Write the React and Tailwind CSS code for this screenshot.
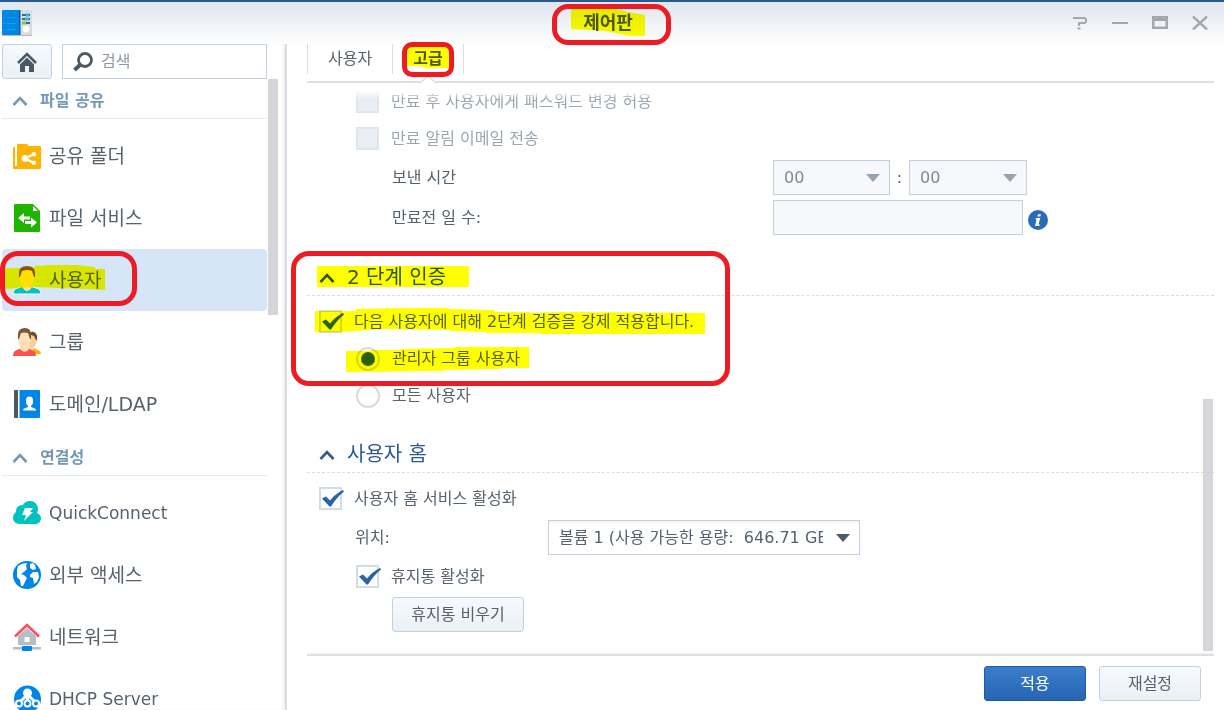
import React, { useState } from "react";

const FolderIcon = () => (
  <svg width="28" height="28" viewBox="0 0 28 28">
    <path d="M0 5h2v19H0z" fill="#ffb300" />
    <path d="M4 3q0-1 1-1h9q1 0 1 2h12q1 0 1 1v21q0 1-1 1H1q-1 0-1-1v-2h4z" fill="#ffb300" />
    <path d="M21 12l-9 4.500 9 4.500" stroke="#fff" strokeWidth="2.400" fill="none" />
    <circle cx="12" cy="16.500" r="3.400" fill="#fff" />
    <circle cx="21" cy="12.200" r="2.300" fill="#fff" />
    <circle cx="21" cy="20.800" r="2.300" fill="#fff" />
  </svg>
);

const FileServiceIcon = () => (
  <svg width="28" height="28" viewBox="0 0 28 28">
    <path d="M2 0h18l7 7v20q0 1-1 1H2q-1 0-1-1V1q0-1 1-1z" fill="#1eb400" />
    <path d="M20 2v5h5z" fill="#fff" />
    <path d="M5 14l6-5v3.500h6v3h-6V19zM24 18.500l-6 5V20h-6v-3h6v-3.500z" fill="#fff" />
  </svg>
);

const UserIcon = () => (
  <svg width="30" height="30" viewBox="0 0 30 30" className="-m-px">
    <path d="M1 29q0-5 5-6l6-2h6l6 2q5 1 5 6z" fill="#00c2c7" stroke="#fff" />
    <path d="M10 18h10v4q-5 8-10 0z" fill="#ffdcae" />
    <path d="M8 8q0-6 7-6t7 6v6q-2 9-7 9t-7-9z" fill="#ffe0b5" />
    <path d="M7 12V8q0-7 8-7t8 7v4h-1l-2-6q-4-2-10 0l-2 6z" fill="#8a5227" />
  </svg>
);

const GroupIcon = () => (
  <svg width="28" height="28" viewBox="0 0 28 28">
    <path d="M20 20l5 2q3 1 3 4h-8z" fill="#ffb300" />
    <path d="M17 6q7-2 7 5 0 6-4 9l-4 2z" fill="#f8cf98" />
    <path d="M15 6q2-3 6-2 4 2 3 8h-1l-2-4z" fill="#6d4a33" />
    <path d="M0 28q0-5 4-6l5-2h5l5 2q4 1 4 6z" fill="#ff5050" />
    <path d="M7 17h9v4q-4 6-9 0z" fill="#ffdcae" />
    <path d="M5 7q0-6 6-6 7 0 7 6v5q-2 8-7 8-4 0-6-8z" fill="#ffe0b8" />
    <path d="M5 11V7q0-7 7-7 6 0 6 7v4h-1l-2-6q-4-1-7 0l-2 6z" fill="#7d543a" />
  </svg>
);

const DomainIcon = () => (
  <svg width="28" height="28" viewBox="0 0 28 28">
    <path d="M2 0h3v28H2q-1 0-1-1V1q0-1 1-1z" fill="#4b5865" />
    <path d="M6.500 0H26q1 0 1 1v26q0 1-1 1H6.500z" fill="#0086e8" />
    <path d="M13 10q0-3.500 3.500-3.500T20 10v3q-1 2.500-2 3v1l4 1.500q1 .5 1 2H10q0-1.500 1-2l4-1.500v-1q-1-.5-2-3z" fill="#fff" />
  </svg>
);

const CloudIcon = () => (
  <svg width="28" height="28" viewBox="0 0 28 28">
    <path d="M6 25q-6-1-6-6 0-4 3-6 0-7 7-7 2-4 7-4 7 0 8 8 0 2-1 4 4 2 4 5 0 5-5 6z" fill="#00c3c0" />
    <path d="M12 9h8l-3 4h3l-9 9 2-6H9z" fill="#fff" />
  </svg>
);

const GlobeIcon = () => (
  <svg width="28" height="28" viewBox="0 0 28 28">
    <circle cx="14" cy="14" r="14" fill="#0086e8" />
    <path d="M5 5q4-3 9-3l-1 3 1 3-3 3-3 2 3 1 3 3-2 4-2 4H8l-1-6-3-3V9z" fill="#fff" />
    <path d="M17 3l3-1 2 2 1 4-3 1-3-2zM17 14l3-3h5l1 5-2 5-3 2-1-6-3-1z" fill="#fff" />
  </svg>
);

const NetworkIcon = () => (
  <svg width="28" height="28" viewBox="0 0 28 28">
    <path d="M5 13l9-8 9 8v9H5z" fill="#b4bec8" />
    <rect x="11.500" y="14" width="5" height="5" fill="#fff" />
    <path d="M2 13.500L14 2l12 11.500" stroke="#ff5050" strokeWidth="2.600" fill="none" />
    <path d="M0 24h28v2.500H0z" fill="#b4bec8" />
    <rect x="9" y="23" width="10" height="5" rx="1" fill="#0086e8" />
  </svg>
);

const DhcpIcon = () => (
  <svg width="28" height="28" viewBox="0 0 28 28">
    <circle cx="14.500" cy="14" r="13.500" fill="#0086e8" />
    <path d="M14.500 9v9M14 10L6 18M15 10l8 8" stroke="#fff" strokeWidth="3" />
    <circle cx="14.500" cy="8" r="4.500" fill="#fff" />
    <g fill="#0086e8" stroke="#fff" strokeWidth="2">
      <circle cx="6" cy="18.500" r="3" />
      <circle cx="14.500" cy="18.500" r="3" />
      <circle cx="23" cy="18.500" r="3" />
    </g>
  </svg>
);

const AppIcon = () => (
  <svg width="30" height="26" viewBox="0 0 30 26">
    <path d="M0 24h30v2H0z" fill="#000" opacity=".25" />
    <path d="M18 0h11q1 0 1 1v23q0 1-1 1H18z" fill="#d5dce3" />
    <path d="M1 0h16v25H1q-1 0-1-1V1q0-1 1-1z" fill="#0086e3" />
    <path d="M17 0h1.500v25H17z" fill="#0a5ea8" />
    <path d="M1 7.500h2m2 0h9M1 13.500h2m2 0h9M1 19.500h2m2 0h9" stroke="#12b0f5" opacity=".7" />
    <path d="M20 5h8M20 9h8M20 13h8" stroke="#56626e" strokeWidth="2" />
    <path d="M24 5h3M23 9h4" stroke="#25b9f0" strokeWidth="3" />
    <path d="M20 13h4" stroke="#7fd321" strokeWidth="3" />
    <circle cx="24" cy="19" r="3.400" fill="#fff" />
  </svg>
);

const Chevron = ({ className }) => (
  <svg width="16" height="10" viewBox="0 0 16 10" className={className}>
    <path d="M1.500 9L8 2.200 14.500 9" stroke="currentColor" strokeWidth="2.600" fill="none" />
  </svg>
);

const sections = [
  {
    title: "파일 공유",
    items: [
      { id: "share", label: "공유 폴더", Icon: FolderIcon },
      { id: "file", label: "파일 서비스", Icon: FileServiceIcon },
      { id: "user", label: "사용자", Icon: UserIcon },
      { id: "group", label: "그룹", Icon: GroupIcon },
      { id: "domain", label: "도메인/LDAP", Icon: DomainIcon },
    ],
  },
  {
    title: "연결성",
    items: [
      { id: "quick", label: "QuickConnect", Icon: CloudIcon, latin: true },
      { id: "external", label: "외부 액세스", Icon: GlobeIcon },
      { id: "network", label: "네트워크", Icon: NetworkIcon },
      { id: "dhcp", label: "DHCP Server", Icon: DhcpIcon, latin: true },
    ],
  },
];

// Red marker frame
const Ring = ({ className }) => (
  <span
    className={`absolute pointer-events-none border-[5px] border-[#ed1c24] ${className}`}
  />
);

// Yellow highlighter stroke
const Marker = ({ width, height, points, className }) => (
  <svg
    width={width}
    height={height}
    viewBox={`0 0 ${width} ${height}`}
    className={`absolute pointer-events-none mix-blend-multiply ${className}`}
  >
    <polygon points={points} fill="#ffff00" />
  </svg>
);

const Check = ({ label, className, ...props }) => (
  <label className={`flex h-[37px] items-center ${className}`}>
    <span className="relative mr-3 size-[23px] shrink-0">
      <input
        type="checkbox"
        className="peer block size-[23px] appearance-none border-2 border-[#d3dbe5] bg-white disabled:border-[#dde6ef] disabled:bg-[#e9eef3]"
        {...props}
      />
      <svg
        width="24"
        height="20"
        viewBox="0 0 24 20"
        className="absolute top-0.5 left-0.5 hidden peer-checked:block"
      >
        <path d="M1 9.500l4-2 4 4Q14 5 22 1l1 1.500Q16 8 10 17.500H8.500z" fill="#2b63a8" />
      </svg>
    </span>
    {label}
  </label>
);

const Radio = ({ label, ...props }) => (
  <label className="ml-[49px] flex h-[37px] items-center">
    <span className="relative mr-3 size-6 shrink-0">
      <input
        type="radio"
        className="peer block size-6 appearance-none rounded-full border-2 border-[#d3dbe5] bg-white"
        {...props}
      />
      <span className="absolute top-[5px] left-[5px] hidden size-3.5 rounded-full bg-[#2b63a8] peer-checked:block" />
    </span>
    {label}
  </label>
);

const Dropdown = ({ className, children, disabled, ...props }) => (
  <span className={`relative h-[35px] shrink-0 ${className}`}>
    <select
      disabled={disabled}
      className="block h-full w-full appearance-none border border-[#c3d1df] bg-white pr-9 pl-2.5 text-[#56626e] opacity-100 shadow-[inset_0_2px_1px_#f2f4f6] disabled:bg-[#f6f8fb] disabled:text-[#808890]"
      {...props}
    >
      {children}
    </select>
    <svg
      width="14"
      height="8"
      viewBox="0 0 14 8"
      className={`absolute top-3.5 right-2.5 pointer-events-none ${disabled ? "text-[#97a3af]" : "text-[#4b5a68]"}`}
    >
      <path d="M0 0h14L7 8z" fill="currentColor" />
    </svg>
  </span>
);

const Heading = ({ children }) => (
  <h2 className="flex h-[37px] items-center border-b border-dashed border-[#d3dfec] pl-3 text-[20px] text-[#2b5a91]">
    <Chevron className="mt-0.5 mr-3" />
    {children}
  </h2>
);

const Sidebar = ({ selected, onSelect }) => (
  <aside className="flex w-[287px] shrink-0 flex-col border-r-2 border-[#dcdde0] shadow-[inset_-2px_0_2px_#f0f0f0]">
    <div className="ml-0.5 flex w-[265px] gap-2.5">
      <button
        aria-label="홈"
        className="flex h-[35px] w-[50px] items-center justify-center rounded-[3px] border border-[#c3d1df] bg-gradient-to-b from-[#f6fafe] to-[#ebf0f5]"
      >
        <svg width="20" height="20" viewBox="0 0 20 20">
          <path d="M1 11l9-9 9 9" stroke="#4b5865" strokeWidth="2.500" fill="none" />
          <path d="M3 12.500l7-7 7 7V20h-5v-6H8v6H3z" fill="#4b5865" />
        </svg>
      </button>
      <label className="flex h-[35px] min-w-0 flex-1 items-center border border-[#c3d1df] bg-white pl-2.5">
        <svg width="20" height="20" viewBox="0 0 20 20" className="shrink-0">
          <circle cx="12" cy="8" r="6.500" stroke="#4b5865" strokeWidth="2.800" fill="none" />
          <path d="M7 13l-5.500 5" stroke="#4b5865" strokeWidth="4" />
        </svg>
        <input
          type="search"
          placeholder="검색"
          aria-label="검색"
          className="ml-2 min-w-0 flex-1 outline-none placeholder:text-[#8f98a2]"
        />
      </label>
    </div>
    <div className="flex min-h-0 flex-1 overflow-hidden pl-0.5">
      <nav className="w-[265px] shrink-0">
        {sections.map((section) => (
          <div key={section.title} className="pb-px">
            <h3 className="flex h-10 items-center border-b border-[#e6ebf0] pt-1 pl-2.5 font-bold text-[#7298b8]">
              <Chevron className="mr-3" />
              {section.title}
            </h3>
            <ul className="pt-1.5">
              {section.items.map(({ id, label, Icon, latin }) => (
                <li key={id} className="relative">
                  <button
                    onClick={() => onSelect(id)}
                    className={`flex h-[62px] w-full items-center gap-2 rounded-sm pl-[11px] text-left text-[#56626e] ${
                      latin ? "text-[17px]" : "text-[19px]"
                    } ${selected === id ? "bg-[#d6e6f8]" : ""}`}
                  >
                    <Icon />
                    {label}
                  </button>
                  {id === "user" && (
                    <>
                      <Marker
                        width={100}
                        height={25}
                        points="0,3 29,3 29,1 45,0 71,0 90,2 90,4 100,4 100,25 82,24 55,23 29,22 0,24"
                        className="top-4 left-[3px]"
                      />
                      <Ring className="top-0.5 -left-0.5 h-[55px] w-[137px] rounded-[18px]" />
                    </>
                  )}
                </li>
              ))}
            </ul>
          </div>
        ))}
      </nav>
      <div className="ml-px h-[236px] w-2.5 shrink-0 bg-[#d3d5d8]" />
    </div>
  </aside>
);

const App = () => {
  const [selected, setSelected] = useState("user");
  const [target, setTarget] = useState("admin");

  return (
    <div className="flex h-screen flex-col overflow-hidden border-t-2 border-[#2b5a91] bg-white font-['DejaVu_Sans','Noto_Sans_CJK_KR',sans-serif] text-[16px] leading-6 text-[#56626e]">
      <header className="grid h-[42px] shrink-0 grid-cols-[1fr_auto_1fr] items-center bg-gradient-to-b from-[#dfe6ef] to-white pr-2.5 pl-0.5">
        <AppIcon />
        <h1 className="relative text-[18px] font-bold text-[#4b5865]">
          제어판
          <Marker
            width={74}
            height={27}
            points="0,0 42,0 74,6 74,27 59,27 34,22 0,20"
            className="-top-0.5 -left-3"
          />
          <Ring className="-top-[7px] -left-[31px] h-[41px] w-[119px] rounded-[16px]" />
        </h1>
        <div className="-mr-1.5 flex justify-end text-[#a3a7ae]">
          <button aria-label="도움말" className="flex h-8 w-10 items-center justify-center">
            <svg width="16" height="14" viewBox="0 0 16 14" fill="none" stroke="currentColor" strokeWidth="2">
              <path d="M1 2h11q2 0 2 2v1q0 2-2 2H7v3M5.500 12.500h3" />
            </svg>
          </button>
          <button aria-label="최소화" className="flex h-8 w-10 items-center justify-center">
            <svg width="16" height="14" viewBox="0 0 16 14" stroke="currentColor" strokeWidth="2">
              <path d="M0 7h16" />
            </svg>
          </button>
          <button aria-label="최대화" className="flex h-8 w-10 items-center justify-center">
            <svg width="16" height="14" viewBox="0 0 16 14">
              <path fillRule="evenodd" d="M0 0h16v13H0zM2.500 5v5.500h11V5z" fill="currentColor" />
            </svg>
          </button>
          <button aria-label="닫기" className="flex h-8 w-10 items-center justify-center">
            <svg width="16" height="14" viewBox="0 0 16 14" stroke="currentColor" strokeWidth="2.400">
              <path d="M1 0.500l14 13M15 0.500l-14 13" />
            </svg>
          </button>
        </div>
      </header>

      <div className="flex min-h-0 flex-1">
        <Sidebar selected={selected} onSelect={setSelected} />

        <main className="flex min-w-0 flex-1 flex-col pr-2.5">
          <div className="relative z-10 ml-5 h-[39px] shrink-0 border-b-2 border-[#dfdfdf] shadow-[0_2px_2px_-1px_#eee]">
            <div className="flex h-[30px]">
              <button className="border-l border-[#d6dfe8] px-5">사용자</button>
              <button className="relative border-x border-[#d6dfe8] px-5 font-bold text-[#4b5865]">
                고급
                <Marker
                  width={44}
                  height={22}
                  points="0,0 44,0 44,22 22,22 14,20 0,20"
                  className="top-0.5 left-3"
                />
                <svg width="16" height="9" viewBox="0 0 16 9" className="absolute top-[31px] left-[27px]">
                  <path d="M0 8L8 1l8 7v1H0z" fill="#fff" />
                  <path d="M0 8L8 1l8 7" fill="none" stroke="#dfdfdf" strokeWidth="1.500" />
                </svg>
                <Ring className="-top-0.5 left-[9px] h-[35px] w-[52px] rounded-[10px]" />
              </button>
            </div>
          </div>

          <div className="relative min-h-0 flex-1 overflow-hidden pl-5">
            <div className="absolute top-0 right-0 left-0 z-10 h-4 bg-gradient-to-b from-white from-50% to-transparent" />

            <Check label="만료 후 사용자에게 패스워드 변경 허용" disabled className="ml-[49px] text-[#9aa6b1]" />
            <Check label="만료 알림 이메일 전송" disabled className="ml-[49px] text-[#9aa6b1]" />

            <div className="mt-[3px] flex items-center pl-[85px]">
              <label htmlFor="hour" className="w-[381px] shrink-0">
                보낸 시간
              </label>
              <Dropdown id="hour" disabled className="w-[117px]">
                <option>00</option>
              </Dropdown>
              <span className="w-[19px] text-center">:</span>
              <Dropdown aria-label="분" disabled className="w-[118px]">
                <option>00</option>
              </Dropdown>
            </div>
            <div className="mt-[5px] flex items-center pl-[85px]">
              <label htmlFor="days" className="w-[381px] shrink-0">
                만료전 일 수:
              </label>
              <input
                id="days"
                type="text"
                disabled
                className="h-[35px] w-[250px] border border-[#c3d1df] bg-[#f6f8fb] px-2.5 shadow-[inset_0_2px_1px_#f2f4f6]"
              />
              <svg width="20" height="20" viewBox="0 0 20 20" className="mt-1 ml-[5px]">
                <circle cx="10" cy="10" r="10" fill="#2b6cb8" />
                <path d="M10 4.200h3l-.6 2.300h-3zM8 8h4.200l-1.700 6.500h1.300l-.4 1.500H7l1.600-6.500H7.500z" fill="#fff" />
              </svg>
            </div>

            <section className="relative mt-6">
              <Heading>2 단계 인증</Heading>
              <Check
                label="다음 사용자에 대해 2단계 검증을 강제 적용합니다."
                defaultChecked
                className="mt-[7px] ml-3"
              />
              <Radio
                name="target"
                label="관리자 그룹 사용자"
                checked={target === "admin"}
                onChange={() => setTarget("admin")}
              />
              <Radio
                name="target"
                label="모든 사용자"
                checked={target === "all"}
                onChange={() => setTarget("all")}
              />
              <Marker
                width={152}
                height={21}
                points="0,0 152,0 152,21 0,21"
                className="top-[7px] left-2.5"
              />
              <Marker
                width={390}
                height={26}
                points="0,3 41,3 41,1 85,0 134,0 134,1 179,2 179,4 215,4 215,5 245,4 390,5 390,26 225,26 225,25 171,25 171,24 135,23 135,22 70,21 25,24 0,24"
                className="top-[49px] left-2"
              />
              <Marker
                width={183}
                height={25}
                points="0,4 24,4 24,3 54,3 54,2 109,1 109,0 183,0 183,21 154,21 154,22 97,23 97,24 0,25"
                className="top-[88px] left-[39px]"
              />
              <Ring className="-top-2 -left-4 h-[135px] w-[439px] rounded-[18px]" />
            </section>

            <section className="mt-[22px]">
              <Heading>사용자 홈</Heading>
              <Check label="사용자 홈 서비스 활성화" defaultChecked className="mt-[7px] ml-3" />
              <div className="mt-[3px] flex items-center pl-12">
                <label htmlFor="volume" className="w-[193px] shrink-0">
                  위치:
                </label>
                <Dropdown id="volume" className="w-[312px]">
                  <option>볼륨 1 (사용 가능한 용량:&nbsp; 646.71 GB)</option>
                </Dropdown>
              </div>
              <Check label="휴지통 활성화" defaultChecked className="mt-[3px] ml-[49px]" />
              <button className="mt-0.5 ml-[85px] h-[35px] w-[132px] rounded-[3px] border border-[#c3d1df] bg-gradient-to-b from-[#f6fafe] to-[#ebf0f5]">
                휴지통 비우기
              </button>
            </section>

            <div className="absolute right-px bottom-[3px] h-[252px] w-2.5 bg-[#c6c8cc]/75" />
          </div>

          <footer className="ml-5 flex h-14 shrink-0 justify-end gap-[13px] border-t-2 border-[#dfdfdf] pt-2.5 pr-[13px] shadow-[0_-2px_2px_-1px_#eee]">
            <button className="h-[35px] w-[102px] rounded-[3px] border border-[#1f5ba5] bg-gradient-to-b from-[#3c7dcc] to-[#2565b3] text-white">
              적용
            </button>
            <button className="h-[35px] w-[102px] rounded-[3px] border border-[#c3d1df] bg-gradient-to-b from-[#f6fafe] to-[#ebf0f5]">
              재설정
            </button>
          </footer>
        </main>
      </div>
    </div>
  );
};

export default App;
